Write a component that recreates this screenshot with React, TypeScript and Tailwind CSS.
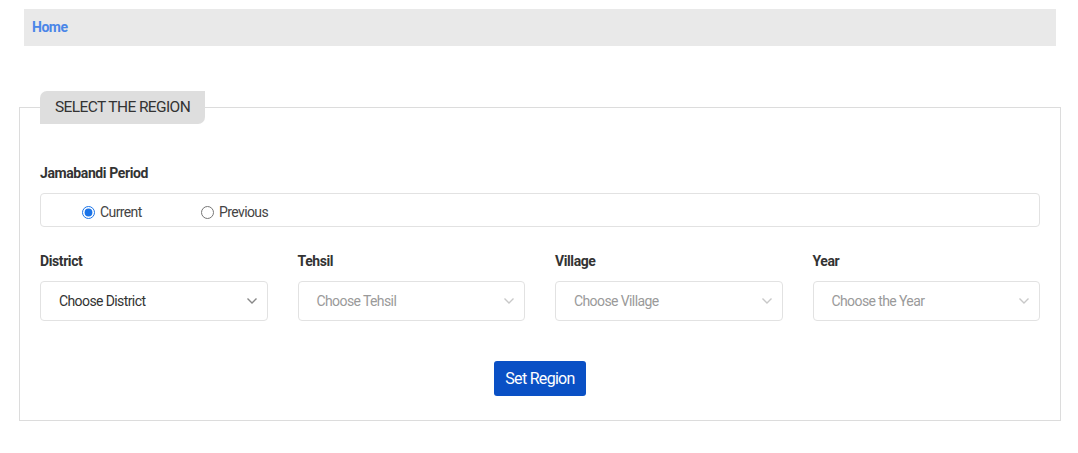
const font = { fontFamily: "Roboto, 'Liberation Sans', sans-serif" };

function Chevron({ muted }: { muted?: boolean }) {
  return (
    <svg width="12" height="8" viewBox="0 0 12 8" className={muted ? "text-[#c8c8c8]" : "text-[#888]"}>
      <path d="M1.5 1.5 L6 6 L10.5 1.5" fill="none" stroke="currentColor" strokeWidth="1.4" />
    </svg>
  );
}

function SelectBox({ label, placeholder, disabled }: { label: string; placeholder: string; disabled?: boolean }) {
  return (
    <div className="flex flex-col">
      <span className="mb-[10px] text-[14px] leading-5 font-bold tracking-[-0.4px] text-[#333]">{label}</span>
      <div className="flex h-[40px] items-center justify-between rounded-[4px] border border-[#e2e2e2] bg-white pr-[9px] pl-[18px]">
        <span className={`text-[14px] tracking-[-0.6px] ${disabled ? "text-[#9a9a9a]" : "text-[#333]"}`}>{placeholder}</span>
        <Chevron muted={disabled} />
      </div>
    </div>
  );
}

export default function App() {
  return (
    <div className="min-h-[453px] bg-white pt-[9px]" style={font}>
      <div className="ml-[24px] flex h-[37px] w-[1032px] items-center bg-[#e9e9e9] px-[8px]">
        <a className="text-[14px] font-bold tracking-[-0.5px] text-[#4a86e8]">Home</a>
      </div>

      <fieldset className="mt-[45px] ml-[19px] w-[1042px] border border-[#dcdcdc] px-[20px] pt-[39px] pb-[24px]">
        <legend className="rounded-tl-[7px] rounded-br-[7px] bg-[#dedede] px-[15px] text-[15.5px] leading-[33px] tracking-[-0.6px] text-[#333]">
          SELECT THE REGION
        </legend>

        <div className="mb-[10px] text-[14px] leading-5 font-bold tracking-[-0.4px] text-[#333]">Jamabandi Period</div>
        <div className="flex h-[34px] items-center rounded-[4px] border border-[#e2e2e2] pt-[4px] pl-[41px] text-[14px] tracking-[-0.6px] text-[#444]">
          <label className="flex w-[119px] items-center gap-[5px]">
            <input type="radio" name="period" defaultChecked className="m-0 h-[13px] w-[13px] accent-[#1a73e8]" />
            Current
          </label>
          <label className="flex items-center gap-[5px]">
            <input type="radio" name="period" className="m-0 h-[13px] w-[13px]" />
            Previous
          </label>
        </div>

        <div className="mt-[24px] grid grid-cols-4 gap-x-[30px]">
          <SelectBox label="District" placeholder="Choose District" />
          <SelectBox label="Tehsil" placeholder="Choose Tehsil" disabled />
          <SelectBox label="Village" placeholder="Choose Village" disabled />
          <SelectBox label="Year" placeholder="Choose the Year" disabled />
        </div>

        <div className="mt-[40px] flex justify-center">
          <button className="h-[35px] w-[92px] rounded-[3px] bg-[#0a50c5] text-[16px] tracking-[-0.7px] text-white">Set Region</button>
        </div>
      </fieldset>
    </div>
  );
}
